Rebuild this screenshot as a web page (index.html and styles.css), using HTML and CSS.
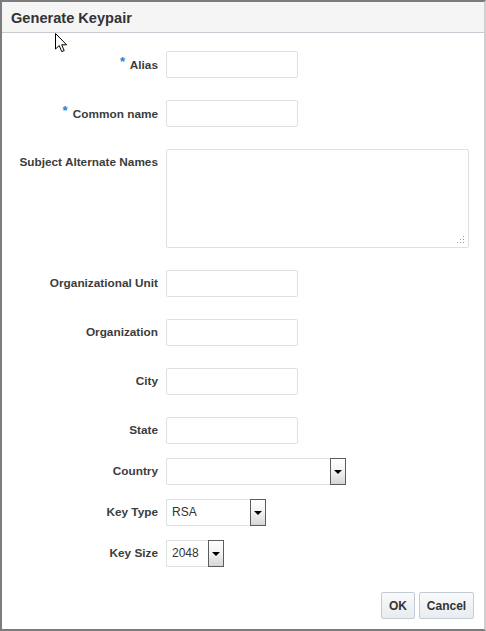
FILE: index.html
```html
<!DOCTYPE html>
<html>
<head>
<meta charset="utf-8">
<title>Generate Keypair</title>
<link rel="stylesheet" href="styles.css">
</head>
<body>
<div class="dialog">
  <div class="header"><span class="title">Generate Keypair</span></div>
  <div class="content">
    <div class="form">
      <div class="row">
        <label class="label"><span class="req">*</span> Alias</label>
        <input class="field" type="text">
      </div>
      <div class="row">
        <label class="label"><span class="req">*</span> Common name</label>
        <input class="field" type="text">
      </div>
      <div class="row">
        <label class="label">Subject Alternate Names</label>
        <div class="area">
          <svg class="grip" width="8" height="8" viewBox="0 0 8 8">
            <rect x="6" y="0" width="1" height="1" fill="#9aa3a8"/>
            <rect x="3" y="3" width="1" height="1" fill="#9aa3a8"/>
            <rect x="6" y="3" width="1" height="1" fill="#9aa3a8"/>
            <rect x="0" y="6" width="1" height="1" fill="#9aa3a8"/>
            <rect x="3" y="6" width="1" height="1" fill="#9aa3a8"/>
            <rect x="6" y="6" width="1" height="1" fill="#9aa3a8"/>
          </svg>
        </div>
      </div>
      <div class="row">
        <label class="label">Organizational Unit</label>
        <input class="field" type="text">
      </div>
      <div class="row">
        <label class="label">Organization</label>
        <input class="field" type="text">
      </div>
      <div class="row">
        <label class="label">City</label>
        <input class="field" type="text">
      </div>
      <div class="row">
        <label class="label">State</label>
        <input class="field" type="text">
      </div>
      <div class="row tight">
        <label class="label">Country</label>
        <div class="select country"><span class="val"></span><span class="arrow"><span class="tri"></span></span></div>
      </div>
      <div class="row tight">
        <label class="label">Key Type</label>
        <div class="select keytype"><span class="val">RSA</span><span class="arrow"><span class="tri"></span></span></div>
      </div>
      <div class="row tight">
        <label class="label">Key Size</label>
        <div class="select keysize"><span class="val">2048</span><span class="arrow"><span class="tri"></span></span></div>
      </div>
    </div>
    <div class="buttons">
      <button class="btn ok">OK</button>
      <button class="btn cancel">Cancel</button>
    </div>
  </div>
  <svg class="cursor" width="13" height="20" viewBox="0 0 13 20">
    <path d="M0.5 0.5 L0.5 16 L4.2 12.6 L6.8 18.6 L9.2 17.6 L6.7 11.8 L11.6 11.8 Z" fill="#ffffff" stroke="#000000" stroke-width="1" stroke-linejoin="miter"/>
  </svg>
</div>
</body>
</html>
```
FILE: styles.css
```css
html, body {
  margin: 0;
  padding: 0;
  background: #ffffff;
}
body {
  font-family: "Liberation Sans", Arial, sans-serif;
  color: #3a3a3a;
}
.dialog {
  position: relative;
  box-sizing: border-box;
  width: 486px;
  height: 631px;
  border-left: 2px solid #7c7c7c;
  border-top: 2px solid #7c7c7c;
  border-bottom: 2px solid #7c7c7c;
  border-right: 2px solid #cfcfcf;
  background: #ffffff;
  display: flex;
  flex-direction: column;
}
.header {
  height: 30px;
  background: #f5f5f5;
  border-bottom: 1px solid #c6ccd2;
  display: flex;
  align-items: center;
  padding-left: 9px;
}
.title {
  font-size: 14.6px;
  font-weight: bold;
  color: #333333;
  position: relative;
  top: 1px;
}
.content {
  flex: 1;
  display: flex;
  flex-direction: column;
  justify-content: space-between;
  padding: 18px 10px 10px 0;
}
.form {
  display: flex;
  flex-direction: column;
  gap: 22px;
}
.row {
  display: grid;
  grid-template-columns: 156px auto;
  column-gap: 8px;
  align-items: start;
}
.row.tight {
  margin-top: -8px;
}
.label {
  display: block;
  height: 27px;
  text-align: right;
  font-size: 11.8px;
  font-weight: bold;
  line-height: 27px;
  color: #3c3c3c;
  white-space: nowrap;
}
.req {
  color: #2a7bd1;
  font-size: 13px;
  position: relative;
  top: -3px;
  margin-right: 2px;
}
.field {
  display: block;
  box-sizing: border-box;
  width: 132px;
  height: 27px;
  margin: 0;
  border: 1px solid #dce2e2;
  border-radius: 2px;
  background: #ffffff;
  padding: 0 5px;
  outline: none;
}
.area {
  position: relative;
  box-sizing: border-box;
  width: 303px;
  height: 99px;
  border: 1px solid #dce2e2;
  border-radius: 2px;
  background: #ffffff;
}
.grip {
  position: absolute;
  right: 3px;
  bottom: 3px;
}
.select {
  box-sizing: border-box;
  height: 27px;
  display: flex;
  align-items: stretch;
  border: 1px solid #dce2e2;
  border-right: none;
  border-radius: 2px 0 0 2px;
  background: #ffffff;
}
.country { width: 180px; }
.keytype { width: 100px; }
.keysize { width: 58px; }
.val {
  flex: 1;
  font-size: 12px;
  line-height: 25px;
  padding-left: 5px;
  color: #333333;
}
.arrow {
  box-sizing: border-box;
  width: 16px;
  margin: -1px 0;
  border: 1px solid #5c5c5c;
  background: linear-gradient(#ffffff 0%, #f4f4f4 45%, #d6d6d6 100%);
  display: flex;
  align-items: center;
  justify-content: center;
}
.tri {
  width: 0;
  height: 0;
  border-left: 4px solid transparent;
  border-right: 4px solid transparent;
  border-top: 4px solid #000000;
  margin-top: 1px;
}
.buttons {
  display: flex;
  justify-content: flex-end;
  gap: 4px;
}
.btn {
  box-sizing: border-box;
  height: 27px;
  margin: 0;
  padding: 0;
  font-family: "Liberation Sans", Arial, sans-serif;
  font-size: 12px;
  font-weight: bold;
  color: #333333;
  border: 1px solid #c4ccd3;
  border-radius: 2px;
  background: linear-gradient(#f8f9fa, #e8edf1);
}
.ok { width: 34px; }
.cancel { width: 55px; }
.cursor {
  position: absolute;
  left: 53px;
  top: 31px;
}
```
